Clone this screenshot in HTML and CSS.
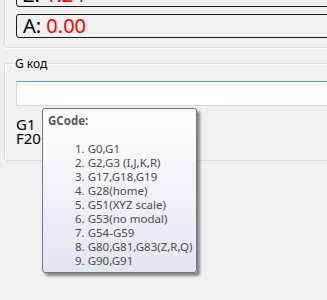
FILE: index.html
```html
<!DOCTYPE html>
<html>
<head>
<meta charset="utf-8">
<link rel="stylesheet" href="styles.css">
</head>
<body>
<div class="page">
  <div class="group axes">
    <div class="axis"><span class="lbl">Z:</span> <span class="val">1.24</span></div>
    <div class="axis"><span class="lbl">A:</span> <span class="val">0.00</span></div>
  </div>
  <fieldset class="group gcode">
    <legend>G код</legend>
    <div class="input"></div>
    <div class="code">G1<br>F20</div>
  </fieldset>
</div>
<div class="tooltip">
  <div class="tt-title">GCode:</div>
  <ol class="tt-list">
    <li>G0,G1</li>
    <li>G2,G3 (I,J,K,R)</li>
    <li>G17,G18,G19</li>
    <li>G28(home)</li>
    <li>G51(XYZ scale)</li>
    <li>G53(no modal)</li>
    <li>G54-G59</li>
    <li>G80,G81,G83(Z,R,Q)</li>
    <li>G90,G91</li>
  </ol>
</div>
</body>
</html>
```

FILE: styles.css
```css
html, body {
  margin: 0;
  padding: 0;
  background: #f0f0f0;
  overflow: hidden;
  width: 327px;
  height: 300px;
}
body {
  position: relative;
  font-family: "Noto Sans", "Open Sans", sans-serif;
}
.page {
  display: flex;
  flex-direction: column;
  width: 327px;
  overflow: hidden;
}
.group {
  border: 1px solid #d5dfe5;
  border-radius: 3px;
  box-shadow: inset 1px 1px 0 #fff, 0 1px 0 #fff;
}
.axes {
  margin: -18px -20px 0 4px;
  padding: 0 0 9px 11px;
  display: flex;
  flex-direction: column;
  gap: 7px;
}
.axis {
  height: 22px;
  border: 1px solid #1a1a1a;
  border-radius: 3px;
  font-size: 20px;
  line-height: 22px;
  padding-left: 6px;
  white-space: nowrap;
}
.lbl { color: #000; }
.val { color: #ff0000; }
.gcode {
  margin: 8px -20px 0 4px;
  padding: 0 0 10px 11px;
  min-width: 0;
  height: 93px;
}
.gcode legend {
  font-size: 12px;
  line-height: 15px;
  padding: 0 2px;
  margin-left: -3px;
  color: #000;
}
.input {
  margin-top: 10px;
  height: 23px;
  background: #fff;
  border: 1px solid #c5daed;
  border-top-color: #569de5;
}
.code {
  margin-top: 11px;
  font-size: 15px;
  line-height: 14px;
  color: #000;
}
.tooltip {
  position: absolute;
  left: 42px;
  top: 108px;
  width: 155px;
  height: 165px;
  box-sizing: border-box;
  border: 1px solid #767676;
  border-radius: 3px;
  background: linear-gradient(#ffffff, #e4e5f0);
  box-shadow: 3px 3px 3px rgba(0, 0, 0, 0.45);
  font-size: 11.5px;
  line-height: 14px;
  color: #4c4c4c;
  padding: 5px 0 0 5px;
}
.tt-title {
  font-weight: bold;
  color: #575757;
}
.tt-list {
  margin: 14px 0 0 0;
  padding-left: 27px;
  list-style-position: inside;
}
```
